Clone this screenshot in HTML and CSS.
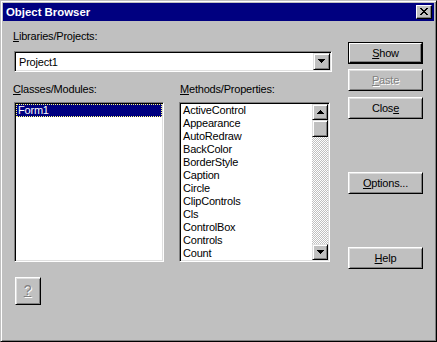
FILE: index.html
```html
<!DOCTYPE html>
<html lang="en">

<head>
  <meta charset="UTF-8">
  <meta name="viewport" content="width=device-width, initial-scale=1.0">
  <title>Object Browser</title>
  <link rel="stylesheet" href="styles.css">
</head>

<body>
  <div class="window">
    <div class="titlebar">
      <span class="title">Object Browser</span>
      <span class="title-close">
        <svg width="8" height="7" viewBox="0 0 8 7" shape-rendering="crispEdges">
          <path d="M0 0h2v1h-2zM6 0h2v1h-2zM1 1h2v1h-2zM5 1h2v1h-2zM2 2h4v1h-4zM3 3h2v1h-2zM2 4h4v1h-4zM1 5h2v1h-2zM5 5h2v1h-2zM0 6h2v1h-2zM6 6h2v1h-2z" fill="#000" />
        </svg>
      </span>
    </div>
    <div class="dialog">
      <div class="main">
        <div class="label"><u>L</u>ibraries/Projects:</div>
        <div class="combo">
          <span class="combo-text">Project1</span>
          <span class="arrow-btn">
            <svg width="7" height="4" viewBox="0 0 7 4" shape-rendering="crispEdges">
              <path d="M0 0h7v1h-1v1h-1v1h-1v1h-1v-1h-1v-1h-1v-1h-1z" fill="#000" />
            </svg>
          </span>
        </div>
        <div class="lists">
          <div class="list-col">
            <div class="label"><u>C</u>lasses/Modules:</div>
            <div class="listbox">
              <div class="list-items">
                <div class="item selected">Form1</div>
              </div>
            </div>
          </div>
          <div class="list-col">
            <div class="label label-right"><u>M</u>ethods/Properties:</div>
            <div class="listbox">
              <div class="list-items">
                <div class="item">ActiveControl</div>
                <div class="item">Appearance</div>
                <div class="item">AutoRedraw</div>
                <div class="item">BackColor</div>
                <div class="item">BorderStyle</div>
                <div class="item">Caption</div>
                <div class="item">Circle</div>
                <div class="item">ClipControls</div>
                <div class="item">Cls</div>
                <div class="item">ControlBox</div>
                <div class="item">Controls</div>
                <div class="item">Count</div>
              </div>
              <div class="scrollbar">
                <span class="arrow-btn">
                  <svg width="7" height="4" viewBox="0 0 7 4" shape-rendering="crispEdges">
                    <path d="M3 0h1v1h1v1h1v1h1v1h-7v-1h1v-1h1v-1h1z" fill="#000" />
                  </svg>
                </span>
                <span class="thumb"></span>
                <span class="track"></span>
                <span class="arrow-btn">
                  <svg width="7" height="4" viewBox="0 0 7 4" shape-rendering="crispEdges">
                    <path d="M0 0h7v1h-1v1h-1v1h-1v1h-1v-1h-1v-1h-1v-1h-1z" fill="#000" />
                  </svg>
                </span>
              </div>
            </div>
          </div>
        </div>
        <div class="btn help-btn disabled"><u>?</u></div>
      </div>
      <div class="side">
        <div class="btn default"><span><u>S</u>how</span></div>
        <div class="btn disabled btn-paste"><u>P</u>aste</div>
        <div class="btn btn-close">Clos<u>e</u></div>
        <div class="btn btn-options"><u>O</u>ptions...</div>
        <div class="btn btn-help"><u>H</u>elp</div>
      </div>
    </div>
  </div>
</body>

</html>
```

FILE: styles.css
```css
* {
  margin: 0;
  padding: 0;
  box-sizing: border-box;
}

body {
  font-family: "Liberation Sans", Arial, sans-serif;
  font-size: 11px;
  line-height: 13px;
  letter-spacing: -0.2px;
  color: #000;
  background: #c0c0c0;
}

.window {
  width: 437px;
  height: 342px;
  padding: 2px;
  background: #c0c0c0;
  border: 1px solid;
  border-color: #c0c0c0 #000 #000 #c0c0c0;
  box-shadow: inset 1px 1px #fff, inset -1px -1px #808080;
  display: flex;
  flex-direction: column;
}

.titlebar {
  height: 18px;
  background: #000080;
  color: #fff;
  display: flex;
  align-items: center;
  justify-content: space-between;
  padding: 0 2px 0 3px;
}

.title {
  font-weight: bold;
  font-size: 11.4px;
  letter-spacing: 0;
}

.title-close {
  width: 16px;
  height: 14px;
  background: #c0c0c0;
  border: 1px solid;
  border-color: #fff #000 #000 #fff;
  box-shadow: inset -1px -1px #808080;
  display: flex;
  align-items: center;
  justify-content: center;
  padding: 0 1px 1px 0;
}

.dialog {
  flex: 1;
  display: flex;
  padding: 9px 11px 0 11px;
}

.main {
  width: 318px;
  display: flex;
  flex-direction: column;
  align-items: flex-start;
}

.label {
  height: 13px;
  margin-left: -1px;
}

.label-right {
  margin-left: 1px;
}

/* sunken field */
.combo,
.listbox {
  background: #fff;
  border: 1px solid;
  border-color: #808080 #fff #fff #808080;
  box-shadow: inset 1px 1px #000, inset -1px -1px #dfdfdf;
  padding: 1px;
}

.combo {
  width: 318px;
  height: 21px;
  margin-top: 8px;
  display: flex;
  align-items: stretch;
}

.combo-text {
  flex: 1;
  padding: 3px 0 0 3px;
}

.arrow-btn {
  width: 17px;
  height: 17px;
  background: #c0c0c0;
  border: 1px solid;
  border-color: #dfdfdf #000 #000 #dfdfdf;
  box-shadow: inset 1px 1px #fff, inset -1px -1px #808080;
  display: flex;
  align-items: center;
  justify-content: center;
  padding-bottom: 1px;
}

.lists {
  display: grid;
  grid-template-columns: 150px 151px;
  column-gap: 15px;
  margin-top: 11px;
}

.listbox {
  margin-top: 6px;
  height: 160px;
  display: flex;
}

.list-items {
  flex: 1;
}

.item {
  height: 13px;
  padding-left: 2px;
  white-space: nowrap;
}

.item.selected {
  background: #000080;
  color: #fff;
  outline: 1px dotted #ffff80;
  outline-offset: -1px;
}

.scrollbar {
  width: 16px;
  display: flex;
  flex-direction: column;
}

.scrollbar .arrow-btn {
  width: 16px;
  height: 16px;
}

.thumb {
  height: 17px;
  background: #c0c0c0;
  border: 1px solid;
  border-color: #dfdfdf #000 #000 #dfdfdf;
  box-shadow: inset 1px 1px #fff, inset -1px -1px #808080;
}

.track {
  flex: 1;
  background-image: conic-gradient(#fff 25%, #c0c0c0 0 50%, #fff 0 75%, #c0c0c0 0);
  background-size: 2px 2px;
}

/* raised button */
.btn {
  width: 75px;
  height: 22px;
  background: #c0c0c0;
  border: 1px solid;
  border-color: #fff #000 #000 #fff;
  box-shadow: inset 1px 1px #dfdfdf, inset -1px -1px #808080;
  display: flex;
  align-items: center;
  justify-content: center;
}

.btn.default {
  border: 1px solid #000;
  box-shadow: none;
  padding: 0;
}

.btn.default span {
  width: 100%;
  height: 100%;
  display: flex;
  align-items: center;
  justify-content: center;
  border: 1px solid;
  border-color: #fff #000 #000 #fff;
  box-shadow: inset -1px -1px #808080;
}

.btn.disabled {
  color: #808080;
  text-shadow: 1px 1px #fff;
}

.help-btn {
  width: 26px;
  height: 28px;
  margin: 15px 0 0 1px;
  font-size: 14px;
  padding: 0 1px 2px 0;
}

.side {
  margin-left: 16px;
  padding-top: 12px;
  display: flex;
  flex-direction: column;
}

.btn-paste {
  margin-top: 5px;
}

.btn-close {
  margin-top: 6px;
}

.btn-options {
  margin-top: 53px;
}

.btn-help {
  margin-top: 53px;
}
```
